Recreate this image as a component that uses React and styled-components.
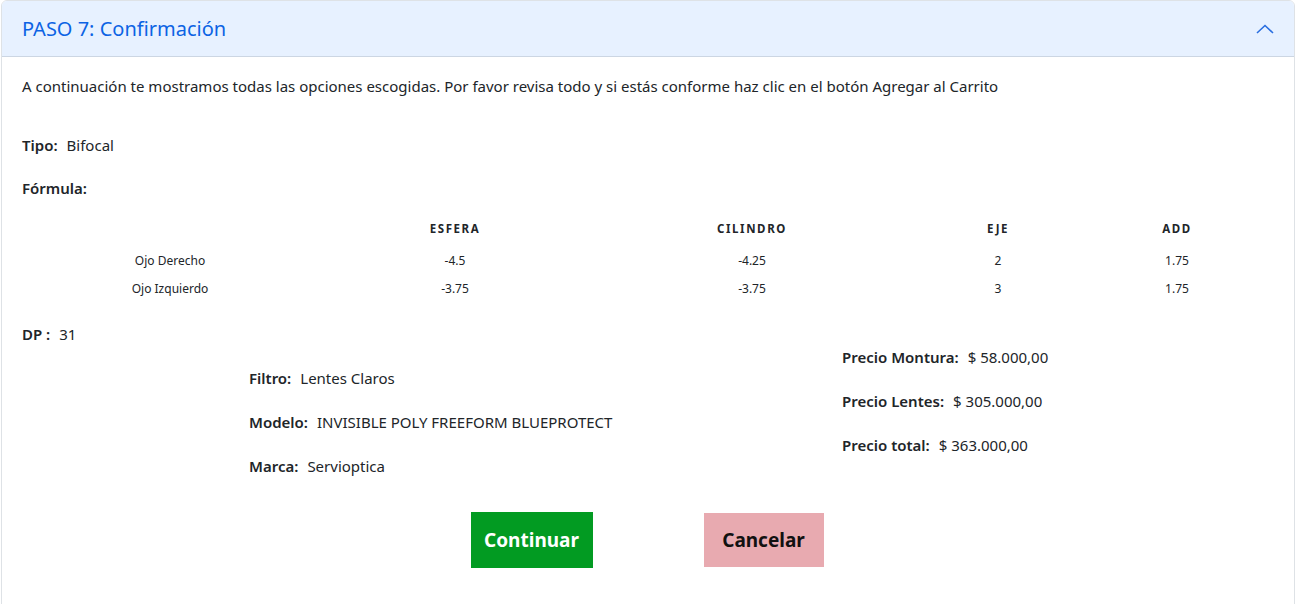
import React from "react";
import styled, { createGlobalStyle } from "styled-components";

const Global = createGlobalStyle`
  html, body { margin: 0; padding: 0; background: #fff; overflow: hidden; }
  body { font-family: "Noto Sans", "Open Sans", sans-serif; color: #212529; }
`;

const Page = styled.div`
  padding: 0 1px;
`;

const Accordion = styled.section`
  border: 1px solid #dee2e6;
  border-radius: 6px;
  overflow: hidden;
  height: 612px;
  box-sizing: border-box;
`;

const Header = styled.div`
  height: 55px;
  background: #e7f1ff;
  border-bottom: 1px solid #ccd6e3;
  display: flex;
  align-items: center;
  justify-content: space-between;
  padding: 0 20px 0 20px;
`;

const Title = styled.h2`
  margin: 0;
  font-size: 20px;
  font-weight: 400;
  color: #0c63e4;
`;

const Body = styled.div`
  padding: 18px 20px 0 20px;
  font-size: 15px;
`;

const Intro = styled.p`
  margin: 0 0 37px 0;
  line-height: 22px;
`;

const Field = styled.div`
  line-height: 22px;
  margin-bottom: ${(p) => p.mb ?? 21}px;
`;

const Label = styled.span`
  font-weight: 600;
  margin-right: ${(p) => p.gap ?? 6}px;
`;

const Table = styled.div`
  display: grid;
  grid-template-columns: 296px 274px 320px 172px 186px;
  font-size: 12px;
  margin-bottom: 21px;
`;

const HeadCell = styled.div`
  text-align: center;
  font-size: 11.5px;
  font-weight: 700;
  letter-spacing: 1.6px;
  line-height: 18px;
  padding-top: 21px;
  padding-bottom: 8px;
`;

const Cell = styled.div`
  text-align: center;
  line-height: 18px;
  padding: 6px 0 4px;
`;

const Summary = styled.div`
  display: grid;
  grid-template-columns: 593px 1fr;
`;

const Column = styled.div`
  padding-left: ${(p) => p.pl}px;
  padding-top: ${(p) => p.pt}px;
  display: flex;
  flex-direction: column;
  gap: ${(p) => p.gap}px;
`;

const Line = styled.div`
  line-height: 22px;
`;

const Buttons = styled.div`
  display: flex;
  justify-content: center;
  align-items: center;
  gap: 111px;
  margin-top: 35px;
  padding-right: 2px;
`;

const Button = styled.button`
  border: none;
  border-radius: 0;
  font-family: "Noto Sans", "Open Sans", sans-serif;
  font-weight: 700;
  font-size: 19px;
  height: ${(p) => p.h}px;
  width: ${(p) => p.w}px;
  background: ${(p) => p.bg};
  color: ${(p) => p.fg};
  cursor: pointer;
`;

const Chevron = () => (
  <svg width="18" height="10" viewBox="0 0 18 10" fill="none">
    <path d="M1 9 L9 1.5 L17 9" stroke="#2b6fe0" strokeWidth="1.6" />
  </svg>
);

const rows = [
  ["Ojo Derecho", "-4.5", "-4.25", "2", "1.75"],
  ["Ojo Izquierdo", "-3.75", "-3.75", "3", "1.75"],
];

export default function App() {
  return (
    <Page>
      <Global />
      <Accordion>
        <Header>
          <Title>PASO 7: Confirmación</Title>
          <Chevron />
        </Header>
        <Body>
          <Intro>
            A continuación te mostramos todas las opciones escogidas. Por favor revisa todo y si estás conforme haz clic en el botón Agregar al Carrito
          </Intro>
          <Field mb={21}>
            <Label gap={9}>Tipo:</Label>Bifocal
          </Field>
          <Field mb={0}>
            <Label>Fórmula:</Label>
          </Field>
          <Table>
            <HeadCell />
            <HeadCell>ESFERA</HeadCell>
            <HeadCell>CILINDRO</HeadCell>
            <HeadCell>EJE</HeadCell>
            <HeadCell>ADD</HeadCell>
            {rows.map((r) =>
              r.map((c, i) => <Cell key={r[0] + i}>{c}</Cell>)
            )}
          </Table>
          <Field mb={0}>
            <Label gap={9}>DP :</Label>31
          </Field>
          <Summary>
            <Column pl={227} pt={22} gap={22}>
              <Line><Label gap={9}>Filtro:</Label>Lentes Claros</Line>
              <Line><Label gap={9}>Modelo:</Label>INVISIBLE POLY FREEFORM BLUEPROTECT</Line>
              <Line><Label gap={9}>Marca:</Label>Servioptica</Line>
            </Column>
            <Column pl={227} pt={1} gap={22}>
              <Line><Label gap={9}>Precio Montura:</Label>$ 58.000,00</Line>
              <Line><Label gap={9}>Precio Lentes:</Label>$ 305.000,00</Line>
              <Line><Label gap={9}>Precio total:</Label>$ 363.000,00</Line>
            </Column>
          </Summary>
          <Buttons>
            <Button w={122} h={56} bg="#029b22" fg="#fff">Continuar</Button>
            <Button w={120} h={54} bg="#e8aab0" fg="#111">Cancelar</Button>
          </Buttons>
        </Body>
      </Accordion>
    </Page>
  );
}
